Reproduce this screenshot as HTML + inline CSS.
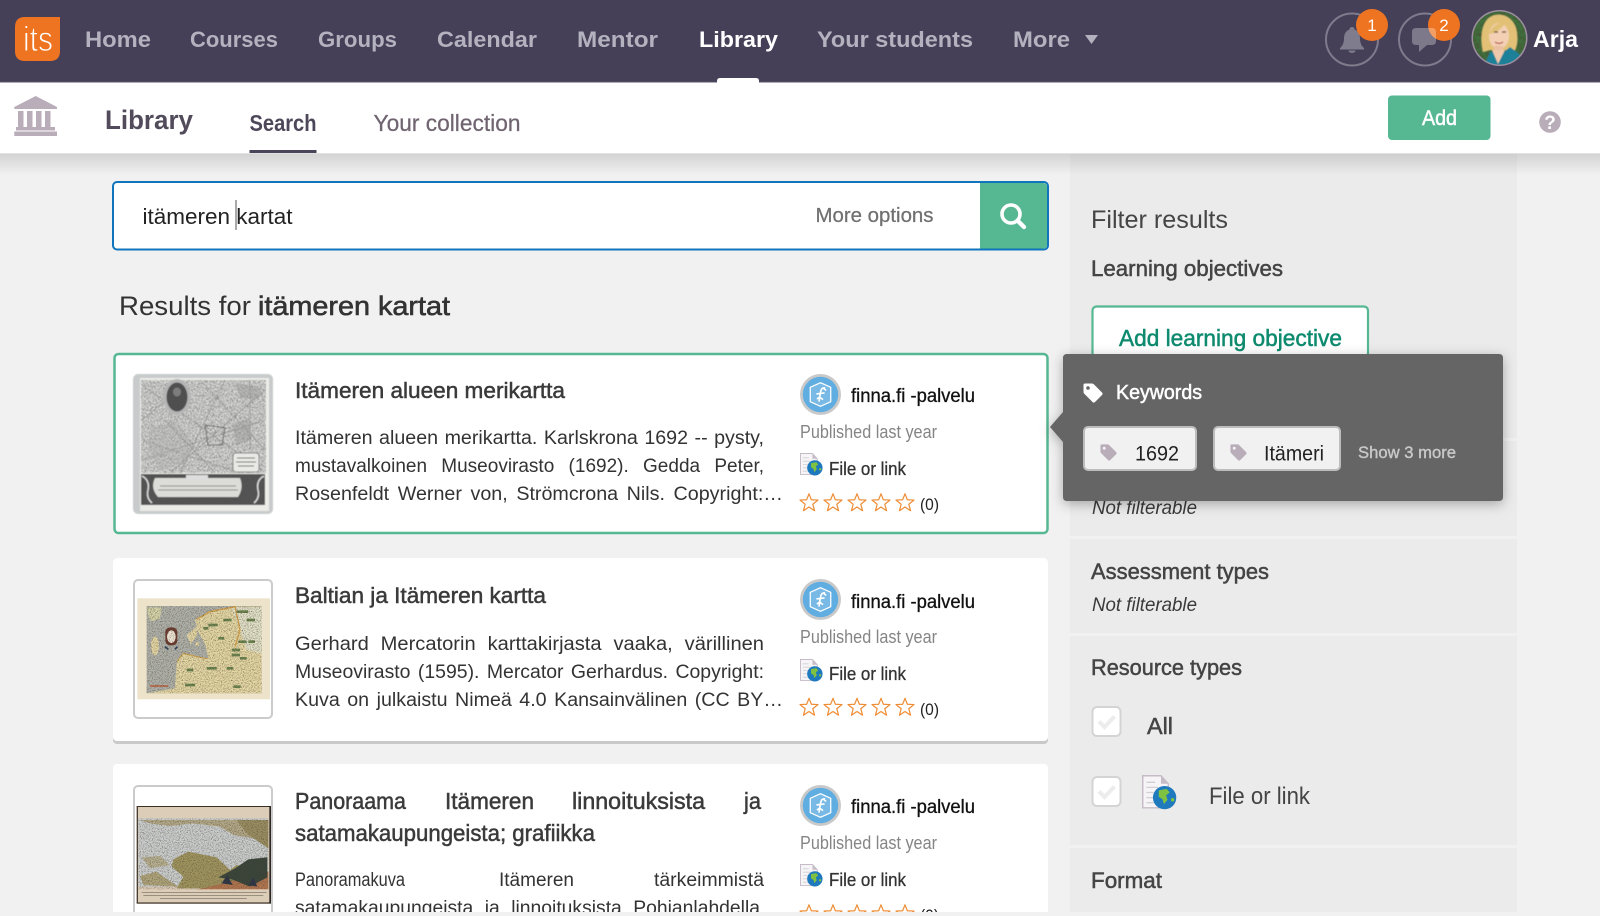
<!DOCTYPE html>
<html lang="fi"><head><meta charset="utf-8"><title>Library</title>
<style>
html,body{margin:0;padding:0;width:1600px;height:916px;overflow:hidden;background:#f1f1f1}
svg{display:block}
text{font-family:"Liberation Sans",sans-serif;white-space:pre;fill:#333}
.m{stroke:currentColor;stroke-width:.5;fill:currentColor}
.n{font-weight:bold;font-size:22px;fill:#b4b2bf}
</style></head><body>
<svg xmlns="http://www.w3.org/2000/svg" width="1600" height="916" viewBox="0 0 1600 916">
<defs>
<linearGradient id="sh" x1="0" y1="0" x2="0" y2="1"><stop offset="0" stop-color="#000" stop-opacity=".13"/><stop offset="1" stop-color="#000" stop-opacity="0"/></linearGradient>
<filter id="speck" x="0" y="0" width="100%" height="100%" color-interpolation-filters="sRGB"><feTurbulence type="fractalNoise" baseFrequency=".95" numOctaves="2" seed="4"/><feColorMatrix values="0 0 0 0 .3  0 0 0 0 .3  0 0 0 0 .3  1.8 1.8 0 0 -1.5"/><feComposite in2="SourceGraphic" operator="in"/></filter>
<filter id="noise" x="0" y="0" width="100%" height="100%" color-interpolation-filters="sRGB"><feTurbulence type="fractalNoise" baseFrequency=".3" numOctaves="3" seed="9"/><feColorMatrix values="0 0 0 0 .3  0 0 0 0 .25  0 0 0 0 .18  1.1 1.1 0 0 -1"/><feComposite in2="SourceGraphic" operator="in"/></filter>
<filter id="blur1" x="-5%" y="-5%" width="110%" height="110%"><feGaussianBlur stdDeviation=".5"/></filter>
<filter id="pop" x="-10%" y="-15%" width="120%" height="130%"><feDropShadow dx="0" dy="3" stdDeviation="6" flood-color="#000" flood-opacity=".3"/></filter>
<clipPath id="av"><circle cx="1499.5" cy="38" r="26.5"/></clipPath>
<clipPath id="mainclip"><rect x="0" y="0" width="1600" height="912"/></clipPath>
<symbol id="tag" viewBox="0 0 20 20"><path fill-rule="evenodd" d="M2 0.5H9Q10 0.5 10.8 1.3L19 9.5Q20.2 10.8 19 12L12 19Q10.8 20.2 9.5 19L1.3 10.8Q0.5 10 0.5 9V2Q0.5 0.5 2 0.5ZM5 3.2A1.8 1.8 0 1 0 5 6.8A1.8 1.8 0 1 0 5 3.2Z"/></symbol>
<symbol id="star" viewBox="-10 -10 20 20"><polygon points="0,-9.2 2.35,-3.24 9,-2.94 3.8,1.24 5.58,7.69 0,4 -5.58,7.69 -3.8,1.24 -9,-2.94 -2.35,-3.24" fill="none" stroke="#ef8c34" stroke-width="1.2" stroke-linejoin="round"/></symbol>
<symbol id="file" viewBox="0 0 24 24">
<path d="M0.5 0.5H13L18 6V22.5H0.5Z" fill="#f6f4f6" stroke="#c6bcc7" stroke-width="1"/><path d="M13 .5V6H18Z" fill="#c6bcc7"/>
<path d="M3 5H9M3 8.5H11M3 12H8M3 15.5H9M3 19H8" stroke="#cfcfd4" stroke-width=".9"/>
<circle cx="15.5" cy="15.5" r="8" fill="#1e79bd"/>
<path d="M11.5 10.5L17 9.5L19 12L16.5 14L17.5 17L15 20L14 16.5L11.5 15Z" fill="#7fc241"/><circle cx="21" cy="17" r="1.2" fill="#7fc241"/>
</symbol>
<symbol id="finna" viewBox="0 0 40 40">
<circle cx="20" cy="20" r="20" fill="#c9c9c9"/><circle cx="20" cy="20" r="17.3" fill="#60ade2"/>
<path d="M20 8.5L30 13V27L20 31.5L10 27V13Z" fill="#79b9e6" stroke="#fff" stroke-width="1.2" stroke-linejoin="round"/>
<path d="M24.5 13.5C21.5 13 20.5 15 20 18L18.5 27M16 19.5L24 18.5M16.5 24.5L19 22.5L22.5 25M23 14L25.5 16" fill="none" stroke="#fff" stroke-width="1.6"/>
</symbol>
<symbol id="chk" viewBox="0 0 30 31"><rect x="1" y="1" width="28" height="29" rx="4.5" fill="#fff" stroke="#d4d4d4" stroke-width="2"/><path d="M7.5 15.5L13 21L23 10.5" fill="none" stroke="#ececec" stroke-width="4"/></symbol>
</defs>

<!-- page -->
<rect width="1600" height="916" fill="#f1f1f1"/>
<g clip-path="url(#mainclip)">
<!-- sidebar -->
<rect x="1070" y="153" width="447" height="763" fill="#ebebeb"/>
<rect x="1070" y="438" width="447" height="3" fill="#f1f1f1"/>
<rect x="1070" y="536" width="447" height="3" fill="#f1f1f1"/>
<rect x="1070" y="633" width="447" height="3" fill="#f1f1f1"/>
<rect x="1070" y="845" width="447" height="3" fill="#f1f1f1"/>

<text x="1091" y="228" font-size="25" textLength="137" lengthAdjust="spacingAndGlyphs" style="fill:#454545">Filter results</text>
<text x="1091" y="276" font-size="22" textLength="192" lengthAdjust="spacingAndGlyphs" class="m" style="color:#444">Learning objectives</text>
<rect x="1092.500" y="306.500" width="275.500" height="70" rx="4" fill="#fff" stroke="#56b793" stroke-width="2.200"/>
<text x="1119" y="346" font-size="23" textLength="223" lengthAdjust="spacingAndGlyphs" class="m" style="color:#0e8a6e">Add learning objective</text>
<text x="1092" y="514" font-size="19" font-style="italic" textLength="105" lengthAdjust="spacingAndGlyphs" style="fill:#3a3a3a">Not filterable</text>
<text x="1091" y="579" font-size="22" textLength="178" lengthAdjust="spacingAndGlyphs" class="m" style="color:#444">Assessment types</text>
<text x="1092" y="611" font-size="19" font-style="italic" textLength="105" lengthAdjust="spacingAndGlyphs" style="fill:#3a3a3a">Not filterable</text>
<text x="1091" y="675" font-size="22" textLength="151" lengthAdjust="spacingAndGlyphs" class="m" style="color:#444">Resource types</text>
<use href="#chk" x="1091.500" y="706" width="30" height="31"/>
<text x="1147" y="734" font-size="23" textLength="26" lengthAdjust="spacingAndGlyphs" class="m" style="color:#444">All</text>
<use href="#chk" x="1091.500" y="776" width="30" height="31"/>
<use href="#file" x="1142" y="775" width="35" height="35"/>
<text x="1209" y="804" font-size="24" textLength="101" lengthAdjust="spacingAndGlyphs" style="fill:#444">File or link</text>
<text x="1091" y="888" font-size="22" textLength="71" lengthAdjust="spacingAndGlyphs" class="m" style="color:#444">Format</text>

<!-- search -->
<rect x="113" y="182" width="935" height="67.500" rx="4" fill="#fff" stroke="#1075bd" stroke-width="2"/>
<path d="M980 183H1043Q1047 183 1047 187V245Q1047 248.500 1043 248.500H980Z" fill="#56b793"/>
<text x="142.500" y="224" font-size="22" textLength="150" lengthAdjust="spacingAndGlyphs" style="fill:#222">itämeren kartat</text>
<rect x="235.500" y="200" width="1" height="30" fill="#555"/>
<text x="815.500" y="222" font-size="20" textLength="118" lengthAdjust="spacingAndGlyphs" class="m" style="color:#707070;stroke-width:.25">More options</text>
<circle cx="1011" cy="214" r="9" fill="none" stroke="#fff" stroke-width="3.600"/>
<path d="M1017.500 220.500L1024 227" stroke="#fff" stroke-width="4.400" stroke-linecap="round"/>

<text x="119" y="315" font-size="27" textLength="132" lengthAdjust="spacingAndGlyphs" style="fill:#333">Results for</text>
<text x="258" y="315" font-size="27" textLength="192" lengthAdjust="spacingAndGlyphs" class="m" style="color:#333;stroke-width:.6">itämeren kartat</text>

<!-- card 1 -->
<rect x="114.500" y="354" width="933" height="179" rx="4" fill="#fff" stroke="#56b793" stroke-width="2.500"/>
<g filter="url(#blur1)">
<rect x="133" y="374" width="140" height="140" rx="5" fill="#c8cbcb"/>
<rect x="140" y="378" width="129" height="133" fill="#ededea"/>
<rect x="141" y="380" width="125" height="93" fill="#777" filter="url(#speck)"/>
<path d="M142 420L190 380M170 473L265 390M142 440L240 473M200 380L265 450M142 385L262 470M225 380L180 473M165 420L215 473M142 460L265 420M250 380L250 450" stroke="#888" stroke-width=".6" fill="none"/>
<path d="M150 428L175 420L195 445L185 462L160 470L148 450Z" fill="#aaa" opacity=".3"/>
<path d="M205 425L225 428L222 445L208 445Z" fill="none" stroke="#666" stroke-width="1"/>
<path d="M235 383L262 388L258 400L240 398ZM232 425L248 418L252 440L236 445Z" fill="#999" opacity=".45"/>
<ellipse cx="177" cy="397" rx="14" ry="18" fill="#b5b5b5"/>
<ellipse cx="177" cy="397" rx="10.500" ry="14.500" fill="#505050"/>
<ellipse cx="177" cy="392" rx="4" ry="4.500" fill="#7d7d7d"/>
<rect x="233" y="453" width="26" height="19" rx="3" fill="#e9e9e6" stroke="#666" stroke-width=".8"/>
<path d="M237 458H255M236 462H256M238 466H254" stroke="#666" stroke-width="1"/>
<rect x="141" y="474" width="124" height="31" fill="#565656"/>
<rect x="141" y="474" width="124" height="31" fill="#aaa" filter="url(#speck)"/>
<path d="M155 478H240Q244 488 238 497H158Q150 488 155 478Z" fill="#dcdcd8"/>
<path d="M160 486H236M158 490H238" stroke="#888" stroke-width="1"/>
<rect x="186" y="475" width="22" height="5" fill="#ddd"/>
<path d="M142 476Q150 480 148 490Q146 498 152 503M264 476Q256 480 258 490Q260 498 254 503" stroke="#ddd" stroke-width="1.500" fill="none"/>
<rect x="140" y="505" width="129" height="6" fill="#ebebe8"/>
</g>
<text x="295" y="398" font-size="22" textLength="270" lengthAdjust="spacingAndGlyphs" class="m" style="color:#3a3a3a">Itämeren alueen merikartta</text>
<text x="295" y="444" font-size="19" textLength="469" lengthAdjust="spacingAndGlyphs" style="fill:#333;word-spacing:1px">Itämeren alueen merikartta. Karlskrona 1692 -- pysty,</text>
<text x="295" y="472" font-size="19" textLength="469" lengthAdjust="spacingAndGlyphs" style="fill:#333;word-spacing:9px">mustavalkoinen Museovirasto (1692). Gedda Peter,</text>
<text x="295" y="500" font-size="19" textLength="488" lengthAdjust="spacingAndGlyphs" style="fill:#333;word-spacing:3px">Rosenfeldt Werner von, Strömcrona Nils. Copyright:…</text>
<use href="#finna" x="800" y="374" width="41" height="41"/>
<text x="851" y="402" font-size="19" textLength="124" lengthAdjust="spacingAndGlyphs" class="m" style="color:#111;stroke-width:.3">finna.fi -palvelu</text>
<text x="800" y="438" font-size="18" textLength="137" lengthAdjust="spacingAndGlyphs" style="fill:#858585">Published last year</text>
<use href="#file" x="800" y="453" width="23" height="23"/>
<text x="829" y="475" font-size="18" textLength="77" lengthAdjust="spacingAndGlyphs" class="m" style="color:#333;stroke-width:.3">File or link</text>
<use href="#star" x="799" y="493" width="20" height="20"/><use href="#star" x="823" y="493" width="20" height="20"/><use href="#star" x="847" y="493" width="20" height="20"/><use href="#star" x="871" y="493" width="20" height="20"/><use href="#star" x="895" y="493" width="20" height="20"/>
<text x="920" y="510" font-size="17" textLength="19" lengthAdjust="spacingAndGlyphs" style="fill:#222">(0)</text>

<!-- card 2 -->
<rect x="113" y="558" width="935" height="186" rx="4" fill="#c9c9c9"/>
<rect x="113" y="558" width="935" height="183" rx="4" fill="#fff"/>
<rect x="134" y="580" width="138" height="138" rx="4" fill="#fff" stroke="#cbcbcb" stroke-width="2"/>
<g transform="translate(120 570) scale(.33333)" filter="url(#blur1)">
<rect x="52" y="85" width="398" height="303" fill="#ece3ca"/>
<rect x="80" y="108" width="345" height="262" fill="#b0b3ac"/>
<path d="M270 125L340 110H425V370H80L165 355L170 280L190 250L240 262L265 265L255 222L232 180L225 150Z" fill="#e6d9a6"/>
<path d="M335 112H425V250L380 240L360 180Z" fill="#e3e3cb"/>
<path d="M82 112H125L120 145L95 155L85 140Z" fill="#d5d5ab"/>
<path d="M230 148L270 125L345 110L360 180L345 230" fill="none" stroke="#d9a448" stroke-width="4"/>
<path d="M170 275L190 250L240 262L262 266" fill="none" stroke="#d3a44a" stroke-width="3"/>
<ellipse cx="105" cy="228" rx="12" ry="28" fill="#e6d9a6"/>
<path d="M200 195L230 170L232 195L212 222Z" fill="#e6d9a6"/><ellipse cx="232" cy="222" rx="6" ry="6" fill="#e6d9a6"/>
<rect x="136" y="172" width="36" height="54" rx="14" fill="#6b3a30"/><ellipse cx="154" cy="200" rx="13" ry="19" fill="#f2eadb"/>
<path d="M135 230L145 238M172 230L165 238" stroke="#2a3f5e" stroke-width="5"/>
<path d="M265 165h28M310 150h25M350 125h35M380 150h25M355 215h25M335 240h25M335 255h25M200 300h20M260 295h30M320 295h20M340 350h22M195 345h30M360 265h20M295 205h18M250 175h15M385 215h20" stroke="#6a8450" stroke-width="8"/>
<path d="M90 348h55" stroke="#c16a48" stroke-width="5"/>
<rect x="80" y="108" width="345" height="262" fill="#444" filter="url(#noise)"/>
</g>
<text x="295" y="603" font-size="22" textLength="251" lengthAdjust="spacingAndGlyphs" class="m" style="color:#3a3a3a">Baltian ja Itämeren kartta</text>
<text x="295" y="650" font-size="19" textLength="469" lengthAdjust="spacingAndGlyphs" style="fill:#333;word-spacing:6px">Gerhard Mercatorin karttakirjasta vaaka, värillinen</text>
<text x="295" y="678" font-size="19" textLength="469" lengthAdjust="spacingAndGlyphs" style="fill:#333;word-spacing:2px">Museovirasto (1595). Mercator Gerhardus. Copyright:</text>
<text x="295" y="706" font-size="19" textLength="488" lengthAdjust="spacingAndGlyphs" style="fill:#333;word-spacing:2px">Kuva on julkaistu Nimeä 4.0 Kansainvälinen (CC BY…</text>
<use href="#finna" x="800" y="579" width="41" height="41"/>
<text x="851" y="608" font-size="19" textLength="124" lengthAdjust="spacingAndGlyphs" class="m" style="color:#111;stroke-width:.3">finna.fi -palvelu</text>
<text x="800" y="643" font-size="18" textLength="137" lengthAdjust="spacingAndGlyphs" style="fill:#858585">Published last year</text>
<use href="#file" x="800" y="659" width="23" height="23"/>
<text x="829" y="680" font-size="18" textLength="77" lengthAdjust="spacingAndGlyphs" class="m" style="color:#333;stroke-width:.3">File or link</text>
<use href="#star" x="799" y="697.500" width="20" height="20"/><use href="#star" x="823" y="697.500" width="20" height="20"/><use href="#star" x="847" y="697.500" width="20" height="20"/><use href="#star" x="871" y="697.500" width="20" height="20"/><use href="#star" x="895" y="697.500" width="20" height="20"/>
<text x="920" y="715" font-size="17" textLength="19" lengthAdjust="spacingAndGlyphs" style="fill:#222">(0)</text>

<!-- card 3 -->
<rect x="113" y="764" width="935" height="160" rx="4" fill="#fff"/>
<rect x="134" y="786" width="138" height="140" rx="4" fill="#fff" stroke="#cbcbcb" stroke-width="2"/>
<g transform="translate(120 770) scale(.33333)" filter="url(#blur1)">
<rect x="50" y="108" width="403" height="292" fill="#dbcdb8"/>
<rect x="50" y="108" width="403" height="3" fill="#3a2d24"/>
<rect x="50" y="397" width="403" height="4" fill="#3a2d24"/>
<rect x="448" y="108" width="5" height="292" fill="#2e2722"/>
<rect x="50" y="108" width="4" height="292" fill="#4a3c30"/>
<path d="M55 145H445V350H55Z" fill="#cbcfd0"/>
<path d="M60 150H445V235L400 205L340 195L300 170L220 160L150 168L90 160Z" fill="#b3a988"/>
<path d="M350 150H445V235L410 210L380 190Z" fill="#9a8e62"/>
<path d="M160 268L205 245L290 262L330 300L350 285L445 305V355H170L190 320L155 290Z" fill="#a0955f"/>
<path d="M60 318L110 305L145 330L175 350L70 345Z" fill="#b0a67c"/>
<path d="M65 262L120 258L150 285L90 295Z" fill="#b8b192"/>
<path d="M260 352L330 335L445 305V358H230Z" fill="#b37650"/>
<path d="M295 322L345 295L385 268L442 262V322L390 350L335 328Z" fill="#38443a"/>
<path d="M305 340L322 315L338 345ZM385 345L400 322L412 350Z" fill="#2c3446"/>
<rect x="55" y="358" width="390" height="39" fill="#dbcdb8"/>
<path d="M65 367H440M70 376H430M120 385H380" stroke="#73675a" stroke-width="2"/>
<rect x="55" y="145" width="390" height="213" fill="#444" filter="url(#noise)"/>
</g>
<text x="295" y="809" font-size="23" textLength="111" lengthAdjust="spacingAndGlyphs" class="m" style="color:#3a3a3a">Panoraama</text>
<text x="445" y="809" font-size="23" textLength="89" lengthAdjust="spacingAndGlyphs" class="m" style="color:#3a3a3a">Itämeren</text>
<text x="572" y="809" font-size="23" textLength="133" lengthAdjust="spacingAndGlyphs" class="m" style="color:#3a3a3a">linnoituksista</text>
<text x="744" y="809" font-size="23" textLength="17" lengthAdjust="spacingAndGlyphs" class="m" style="color:#3a3a3a">ja</text>
<text x="295" y="841" font-size="23" textLength="300" lengthAdjust="spacingAndGlyphs" class="m" style="color:#3a3a3a">satamakaupungeista; grafiikka</text>
<text x="295" y="886" font-size="19" textLength="110" lengthAdjust="spacingAndGlyphs" style="fill:#333">Panoramakuva</text>
<text x="499" y="886" font-size="19" textLength="75" lengthAdjust="spacingAndGlyphs" style="fill:#333">Itämeren</text>
<text x="654" y="886" font-size="19" textLength="110" lengthAdjust="spacingAndGlyphs" style="fill:#333">tärkeimmistä</text>
<text x="295" y="914" font-size="19" textLength="465" lengthAdjust="spacingAndGlyphs" style="fill:#333;word-spacing:6px">satamakaupungeista ja linnoituksista Pohjanlahdella</text>
<use href="#finna" x="800" y="785" width="41" height="41"/>
<text x="851" y="813" font-size="19" textLength="124" lengthAdjust="spacingAndGlyphs" class="m" style="color:#111;stroke-width:.3">finna.fi -palvelu</text>
<text x="800" y="849" font-size="18" textLength="137" lengthAdjust="spacingAndGlyphs" style="fill:#858585">Published last year</text>
<use href="#file" x="800" y="864" width="23" height="23"/>
<text x="829" y="886" font-size="18" textLength="77" lengthAdjust="spacingAndGlyphs" class="m" style="color:#333;stroke-width:.3">File or link</text>
<use href="#star" x="799" y="904" width="20" height="20"/><use href="#star" x="823" y="904" width="20" height="20"/><use href="#star" x="847" y="904" width="20" height="20"/><use href="#star" x="871" y="904" width="20" height="20"/><use href="#star" x="895" y="904" width="20" height="20"/>
<text x="920" y="921" font-size="17" textLength="19" lengthAdjust="spacingAndGlyphs" style="fill:#222">(0)</text>
</g>
<rect x="0" y="912" width="1600" height="4" fill="#f1f1f1"/>

<!-- popover -->
<g filter="url(#pop)">
<path d="M1067 354H1499Q1503 354 1503 358V497Q1503 501 1499 501H1067Q1063 501 1063 497V442L1050 427L1063 412V358Q1063 354 1067 354Z" fill="#656565"/>
</g>
<use href="#tag" x="1083" y="383" width="20" height="20" fill="#fff"/>
<text x="1116" y="399" font-size="20" textLength="86" lengthAdjust="spacingAndGlyphs" class="m" style="color:#fff;stroke-width:.5">Keywords</text>
<rect x="1084" y="427" width="112" height="43" rx="4" fill="#f1f1f1" stroke="#bdbdbd" stroke-width="2"/>
<use href="#tag" x="1100" y="444" width="17" height="17" fill="#b8adb9"/>
<text x="1135" y="460.500" font-size="21" textLength="44" lengthAdjust="spacingAndGlyphs" style="fill:#222">1692</text>
<rect x="1214" y="427" width="126" height="43" rx="4" fill="#f1f1f1" stroke="#bdbdbd" stroke-width="2"/>
<use href="#tag" x="1230" y="444" width="17" height="17" fill="#b8adb9"/>
<text x="1264" y="460.500" font-size="21" textLength="60" lengthAdjust="spacingAndGlyphs" style="fill:#222">Itämeri</text>
<text x="1358" y="458" font-size="17" textLength="98" lengthAdjust="spacingAndGlyphs" class="m" style="color:#c8c8c8;stroke-width:.4">Show 3 more</text>

<!-- subheader -->
<rect x="0" y="153" width="1600" height="22" fill="url(#sh)"/>
<rect x="0" y="82" width="1600" height="71" fill="#fff"/>
<rect x="0" y="153" width="1600" height="1" fill="#e2e2e2"/>
<g fill="#b8adb9">
<polygon points="35.700,96 57,107 57,109 14.300,109 14.300,107"/>
<rect x="18" y="111" width="5.500" height="16"/><rect x="27" y="111" width="5.500" height="16"/><rect x="36" y="111" width="5.500" height="16"/><rect x="45" y="111" width="5.500" height="16"/>
<rect x="16" y="127" width="39" height="3.500"/><rect x="14.300" y="131.500" width="42.700" height="4.500"/>
</g>
<text x="105" y="129" font-size="27" font-weight="bold" textLength="88" lengthAdjust="spacingAndGlyphs" style="fill:#524b5b">Library</text>
<text x="249.500" y="131" font-size="23" font-weight="bold" textLength="67" lengthAdjust="spacingAndGlyphs" style="fill:#4e4759">Search</text>
<rect x="249.500" y="150" width="67" height="3" fill="#4a4458"/>
<text x="373.500" y="131" font-size="23" textLength="147" lengthAdjust="spacingAndGlyphs" class="m" style="color:#6f6470;stroke-width:.25">Your collection</text>
<rect x="1388" y="95.500" width="102.500" height="44.500" rx="4" fill="#56b793"/>
<text x="1422" y="125" font-size="21" textLength="35" lengthAdjust="spacingAndGlyphs" class="m" style="color:#fff">Add</text>
<circle cx="1550" cy="122" r="10.800" fill="#b8adb9"/>
<text x="1550" y="129" font-size="19" font-weight="bold" text-anchor="middle" style="fill:#fff">?</text>

<!-- header -->
<rect x="0" y="0" width="1600" height="82" fill="#454058"/>
<rect x="0" y="81.500" width="1600" height="1" fill="#5a5569"/>
<path d="M717 82.500V81Q717 78 720 78H756Q759 78 759 81V82.500Z" fill="#fff"/>
<path d="M25 17H60V51Q60 61 50 61H25Q15 61 15 51V27Q15 17 25 17Z" fill="#ef7421"/>
<text x="23" y="51" font-size="35" textLength="30" lengthAdjust="spacingAndGlyphs" style="fill:#fff;stroke:#ef7421;stroke-width:1">its</text>
<text class="n" x="85" y="47" textLength="66" lengthAdjust="spacingAndGlyphs">Home</text>
<text class="n" x="190" y="47" textLength="88" lengthAdjust="spacingAndGlyphs">Courses</text>
<text class="n" x="318" y="47" textLength="79" lengthAdjust="spacingAndGlyphs">Groups</text>
<text class="n" x="437" y="47" textLength="100" lengthAdjust="spacingAndGlyphs">Calendar</text>
<text class="n" x="577" y="47" textLength="81" lengthAdjust="spacingAndGlyphs">Mentor</text>
<text class="n" x="699" y="47" textLength="79" lengthAdjust="spacingAndGlyphs" style="fill:#fff">Library</text>
<text class="n" x="817" y="47" textLength="156" lengthAdjust="spacingAndGlyphs">Your students</text>
<text class="n" x="1013" y="47" textLength="57" lengthAdjust="spacingAndGlyphs">More</text>
<polygon points="1085,35 1098,35 1091.500,44" fill="#b4b2bf"/>

<circle cx="1352" cy="39.500" r="26" fill="none" stroke="#7f7b8c" stroke-width="2"/>
<path d="M1352 27C1353.500 27 1354.500 28 1354.500 29.500C1358.500 31 1360 34.500 1360 38.500C1360 43.500 1362 46.500 1364 48V49.500H1340V48C1342 46.500 1344 43.500 1344 38.500C1344 34.500 1345.500 31 1349.500 29.500C1349.500 28 1350.500 27 1352 27ZM1348.500 50.500H1355.500A3.500 2.500 0 0 1 1348.500 50.500Z" fill="#7f7c8d"/>
<circle cx="1372" cy="25" r="16" fill="#ef7421"/>
<text x="1372" y="31" font-size="17" text-anchor="middle" style="fill:#fff">1</text>
<circle cx="1425" cy="39.500" r="26" fill="none" stroke="#7f7b8c" stroke-width="2"/>
<circle cx="1444" cy="25" r="16" fill="#ef7421"/>
<path d="M1416 28H1432Q1436 28 1436 32V41Q1436 45 1432 45H1427L1419 52V45H1416Q1412 45 1412 41V32Q1412 28 1416 28Z" fill="#fff" fill-opacity=".3"/>
<text x="1444" y="31" font-size="17" text-anchor="middle" style="fill:#fff">2</text>

<circle cx="1499.500" cy="38" r="28" fill="#9d8fa0"/>
<g clip-path="url(#av)" filter="url(#blur1)">
<rect x="1470" y="8" width="60" height="60" fill="#3f6e3c"/>
<rect x="1470" y="8" width="60" height="60" fill="#111" filter="url(#noise)"/>
<path d="M1483 52C1480 38 1481 21 1492 16C1504 11 1516 20 1517 33C1518 41 1517 47 1514 52L1505 50H1490Z" fill="#e2c177"/>
<ellipse cx="1499" cy="36" rx="10" ry="13" fill="#f3d0b4"/>
<path d="M1489 34C1492 26 1498 22 1506 22C1503 28 1496 33 1489 34Z" fill="#e2c177"/>
<rect x="1494" y="46" width="9" height="8" fill="#ebc0a2"/>
<path d="M1483 68L1490 52L1497 52L1504 52L1510 47L1522 56L1526 68Z" fill="#1c8098"/>
<path d="M1492 50L1505 50L1498 64Z" fill="#f0c9ac"/>
<path d="M1494 32h4M1502 32h4" stroke="#5a4030" stroke-width="1.200"/>
<path d="M1495 42Q1499 45 1503 42" stroke="#b5564c" stroke-width="1.200" fill="none"/>
</g>
<text x="1533" y="47" font-size="23" font-weight="bold" textLength="45" lengthAdjust="spacingAndGlyphs" style="fill:#fff">Arja</text>
</svg>
</body></html>
